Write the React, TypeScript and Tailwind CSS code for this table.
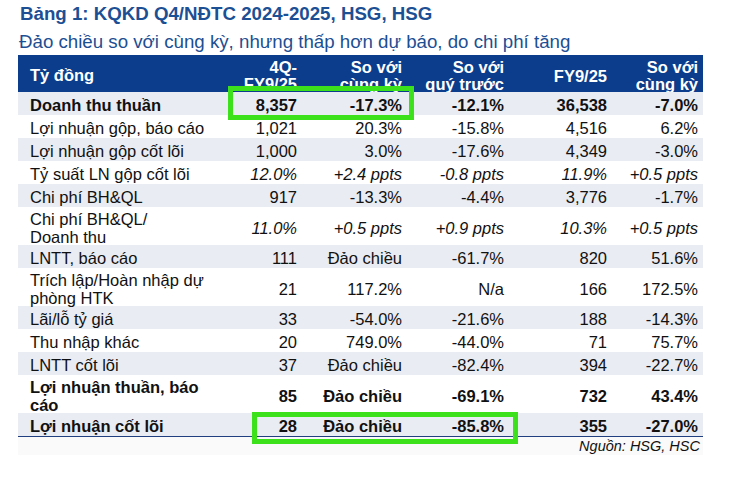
import React from 'react';

interface Row {
  label: string[];
  vals: string[];
  bold?: boolean;
  italic?: boolean;
}

const rows: Row[] = [
  { label: ['Doanh thu thuần'], vals: ['8,357', '-17.3%', '-12.1%', '36,538', '-7.0%'], bold: true },
  { label: ['Lợi nhuận gộp, báo cáo'], vals: ['1,021', '20.3%', '-15.8%', '4,516', '6.2%'] },
  { label: ['Lợi nhuận gộp cốt lõi'], vals: ['1,000', '3.0%', '-17.6%', '4,349', '-3.0%'] },
  { label: ['Tỷ suất LN gộp cốt lõi'], vals: ['12.0%', '+2.4 ppts', '-0.8 ppts', '11.9%', '+0.5 ppts'], italic: true },
  { label: ['Chi phí BH&QL'], vals: ['917', '-13.3%', '-4.4%', '3,776', '-1.7%'] },
  { label: ['Chi phí BH&QL/', 'Doanh thu'], vals: ['11.0%', '+0.5 ppts', '+0.9 ppts', '10.3%', '+0.5 ppts'], italic: true },
  { label: ['LNTT, báo cáo'], vals: ['111', 'Đảo chiều', '-61.7%', '820', '51.6%'] },
  { label: ['Trích lập/Hoàn nhập dự', 'phòng HTK'], vals: ['21', '117.2%', 'N/a', '166', '172.5%'] },
  { label: ['Lãi/lỗ tỷ giá'], vals: ['33', '-54.0%', '-21.6%', '188', '-14.3%'] },
  { label: ['Thu nhập khác'], vals: ['20', '749.0%', '-44.0%', '71', '75.7%'] },
  { label: ['LNTT cốt lõi'], vals: ['37', 'Đảo chiều', '-82.4%', '394', '-22.7%'] },
  { label: ['Lợi nhuận thuần, báo', 'cáo'], vals: ['85', 'Đảo chiều', '-69.1%', '732', '43.4%'], bold: true },
  { label: ['Lợi nhuận cốt lõi'], vals: ['28', 'Đảo chiều', '-85.8%', '355', '-27.0%'], bold: true },
];

const grid = 'grid grid-cols-[219px_65px_105px_102px_103px_91px]';

export default function App() {
  return (
    <div
      className="w-[743px] h-[496px] bg-white pl-[18px] pt-[3px] text-[#111]"
      style={{ fontFamily: '"Liberation Sans", Arial, sans-serif' }}
    >
      {/* Title */}
      <div className="pl-[2px] text-[18.7px] leading-[22px] font-bold text-[#1c4f94]">
        Bảng 1: KQKD Q4/NĐTC 2024-2025, HSG, HSG
      </div>
      <div className="pl-[1px] mt-[6px] text-[18.7px] leading-[22px] text-[#1c4f94]">
        Đảo chiều so với cùng kỳ, nhưng thấp hơn dự báo, do chi phí tăng
      </div>

      <div className="relative w-[685px] mt-[2px]">
        {/* Header */}
        <div className={`${grid} h-[37px] overflow-hidden bg-[#0b3d8c] text-white font-bold text-[16.5px] leading-[17px]`}>
          <div className="pl-[12px] pt-[12px]">Tỷ đồng</div>
          <div className="pr-[5px] pt-[4px] text-right">
            4Q-
            <br />
            FY9/25
          </div>
          <div className="pr-[5px] pt-[4px] text-right">
            So với
            <br />
            cùng kỳ
          </div>
          <div className="pr-[5px] pt-[4px] text-right">
            So với
            <br />
            quý trước
          </div>
          <div className="pr-[5px] pt-[13px] text-right">FY9/25</div>
          <div className="pr-[5px] pt-[4px] text-right">
            So với
            <br />
            cùng kỳ
          </div>
        </div>

        {/* Body */}
        <div className="border-b border-[#1f3f80]">
          {rows.map((row, i) => (
            <div
              key={i}
              className={[
                grid,
                'items-center pt-[4px] text-[16.5px] leading-[17.5px]',
                row.label.length > 1 ? 'h-[38px]' : 'h-[23px]',
                i % 2 === 0 ? 'bg-[#e9ecf3]' : 'bg-white',
                row.bold ? 'font-bold' : '',
              ].join(' ')}
            >
              <div className="pl-[12px] whitespace-nowrap">
                {row.label.map((l, j) => (
                  <div key={j}>{l}</div>
                ))}
              </div>
              {row.vals.map((v, j) => (
                <div key={j} className={`pr-[5px] text-right whitespace-nowrap ${row.italic ? 'italic' : ''}`}>
                  {v}
                </div>
              ))}
            </div>
          ))}
        </div>

        {/* Source */}
        <div className="h-[18px] bg-[#fafafa] pr-[3px] text-right italic text-[14.5px] leading-[16px] pt-[1px]">
          Nguồn: HSG, HSC
        </div>

        {/* Highlight boxes */}
        <div className="absolute left-[210px] top-[31px] w-[186px] h-[34px] border-[5px] border-[#3ce11c]" />
        <div className="absolute left-[234px] top-[357px] w-[266px] h-[32px] border-[5px] border-[#3ce11c]" />
      </div>
    </div>
  );
}
